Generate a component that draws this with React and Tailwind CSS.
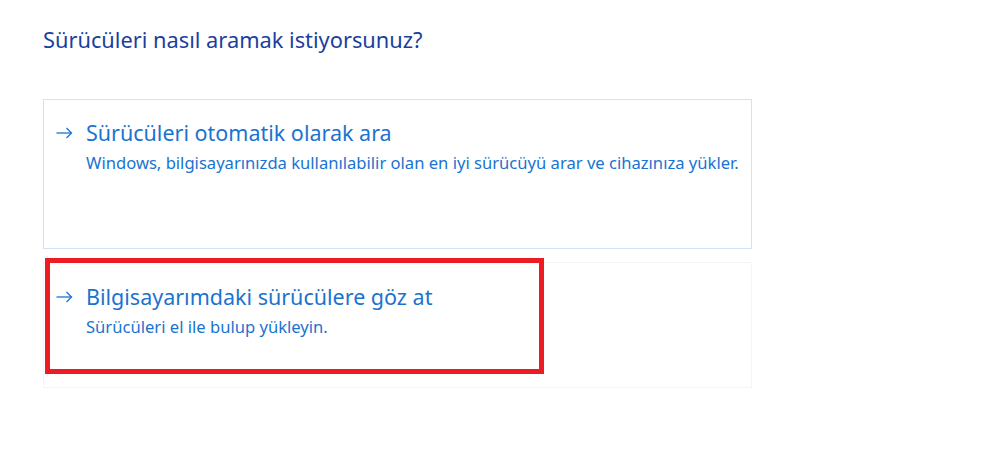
function Arrow() {
  return (
    <svg width="17" height="12" viewBox="0 0 17 12" className="shrink-0" fill="none" stroke="#1a73d0" strokeWidth="1.3">
      <path d="M0.5 6 H15.5" />
      <path d="M10.5 1 L15.5 6 L10.5 11" />
    </svg>
  );
}

export default function App() {
  const font = { fontFamily: '"Noto Sans", "Open Sans", sans-serif' };
  return (
    <div className="w-[999px] h-[461px] bg-white overflow-hidden" style={font}>
      <div className="pl-[43px] pt-[25px] w-[752px]">
        <h1 className="text-[21.8px] leading-[30px] text-[#1c3f9e] font-normal">Sürücüleri nasıl aramak istiyorsunuz?</h1>
        <div className="mt-[44px] flex flex-col gap-[13px]">
          <div className="h-[150px] border border-[#cfe3f6] pl-[12px] pt-[19px]">
            <div className="flex items-center text-[#1a73d0]">
              <div className="w-[30px] flex items-center"><Arrow /></div>
              <span className="text-[21.5px] leading-[28px]">Sürücüleri otomatik olarak ara</span>
            </div>
            <div className="mt-[5px] pl-[30px] text-[16.6px] leading-[22px] text-[#1a73d0]">Windows, bilgisayarınızda kullanılabilir olan en iyi sürücüyü arar ve cihazınıza yükler.</div>
          </div>
          <div className="relative h-[126px] border border-[#f4f4f4] pl-[12px] pt-[20px]">
            <div className="absolute left-[1px] top-[-5px] w-[499px] h-[116px] border-[5px] border-[#ed1c24]"></div>
            <div className="flex items-center text-[#1a73d0]">
              <div className="w-[30px] flex items-center"><Arrow /></div>
              <span className="text-[21.5px] leading-[28px]">Bilgisayarımdaki sürücülere göz at</span>
            </div>
            <div className="mt-[5px] pl-[30px] text-[16.6px] leading-[22px] text-[#1a73d0]">Sürücüleri el ile bulup yükleyin.</div>
          </div>
        </div>
      </div>
    </div>
  );
}
